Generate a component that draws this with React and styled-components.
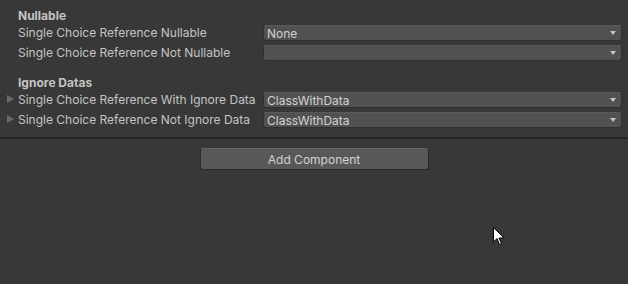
import React from 'react';
import styled, { createGlobalStyle } from 'styled-components';

const GlobalStyle = createGlobalStyle`
  html, body {
    margin: 0;
    padding: 0;
    background: #383838;
  }
  body {
    font-family: Inter, "Noto Sans", sans-serif;
    font-size: 12px;
    color: #c4c4c4;
  }
`;

const Inspector = styled.div`
  position: relative;
  width: 628px;
  height: 284px;
  background: #383838;
  padding-top: 7px;
  box-sizing: border-box;
  overflow: hidden;
`;

const Section = styled.div`
  display: flex;
  flex-direction: column;
  gap: 4px;
  padding: 0 6px 0 18px;
  margin-top: ${p => p.$top || 0}px;
`;

const Header = styled.div`
  height: 18px;
  line-height: 18px;
  font-weight: 700;
  margin-bottom: -4px;
`;

const Row = styled.div`
  position: relative;
  display: grid;
  grid-template-columns: 245px 1fr;
  align-items: center;
  height: 16px;
`;

const Label = styled.span`
  white-space: nowrap;
  line-height: 16px;
`;

const Foldout = styled.span`
  position: absolute;
  left: -11px;
  top: 3px;
  width: 0;
  height: 0;
  border-top: 4.5px solid transparent;
  border-bottom: 4.5px solid transparent;
  border-left: 7px solid #6a6a6a;
`;

const Popup = styled.div`
  display: flex;
  align-items: center;
  justify-content: space-between;
  height: 16px;
  box-sizing: border-box;
  padding: 0 5px 0 3px;
  background: #515151;
  border: 1px solid #303030;
  border-top-color: #5a5a5a;
  border-radius: 3px;
  color: #d2d2d2;
`;

const Arrow = styled.span`
  width: 0;
  height: 0;
  border-left: 3.5px solid transparent;
  border-right: 3.5px solid transparent;
  border-top: 4px solid #c4c4c4;
`;

const Divider = styled.div`
  margin-top: 9px;
  height: 2px;
  background: #232323;
`;

const ButtonBar = styled.div`
  display: flex;
  justify-content: center;
  padding-top: 9px;
`;

const Button = styled.button`
  width: 229px;
  height: 22px;
  padding: 0;
  background: #585858;
  border: 1px solid #2a2a2a;
  border-top-color: #656565;
  border-radius: 3px;
  color: #d2d2d2;
  font-family: Inter, "Noto Sans", sans-serif;
  font-size: 12px;
`;

const Cursor = styled.svg`
  position: absolute;
  left: 493px;
  top: 227px;
`;

const Field = ({ label, value, foldout }) => (
  <Row>
    {foldout && <Foldout />}
    <Label>{label}</Label>
    <Popup>
      <span>{value}</span>
      <Arrow />
    </Popup>
  </Row>
);

export default function App() {
  return (
    <>
      <GlobalStyle />
      <Inspector>
        <Section>
          <Header>Nullable</Header>
          <Field label="Single Choice Reference Nullable" value="None" />
          <Field label="Single Choice Reference Not Nullable" value="" />
        </Section>
        <Section $top={13}>
          <Header>Ignore Datas</Header>
          <Field foldout label="Single Choice Reference With Ignore Data" value="ClassWithData" />
          <Field foldout label="Single Choice Reference Not Ignore Data" value="ClassWithData" />
        </Section>
        <Divider />
        <ButtonBar>
          <Button>Add Component</Button>
        </ButtonBar>
        <Cursor width="12" height="19" viewBox="0 0 12 19">
          <path d="M0.5 0.5 L0.5 15 L4 11.5 L6.5 17.5 L8.5 16.5 L6 11 L11 11 Z" fill="#fff" stroke="#000" strokeWidth="1" />
        </Cursor>
      </Inspector>
    </>
  );
}
